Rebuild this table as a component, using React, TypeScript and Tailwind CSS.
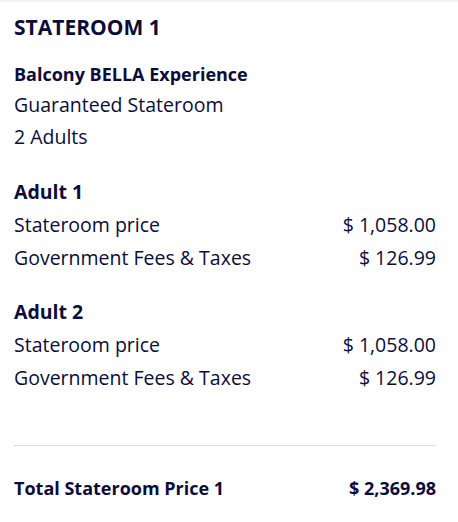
function Row({ label, value }: { label: string; value: string }) {
  return (
    <div className="flex justify-between text-[19.5px] leading-[33px]">
      <span>{label}</span>
      <span>{value}</span>
    </div>
  );
}

export default function App() {
  const font = { fontFamily: '"Open Sans", sans-serif' };
  return (
    <div style={font} className="w-[458px] h-[522px] bg-white text-[#0b0d38] border-t-2 border-[#f4f4f4]">
      <div className="pl-[14px] pr-[22px] pt-[10px]">
        <div className="text-[21px] font-bold leading-[30px]">STATEROOM 1</div>
        <div className="mt-[18px] text-[18px] font-bold leading-[29px]">Balcony BELLA Experience</div>
        <div className="text-[19.5px] leading-[32px]">Guaranteed Stateroom</div>
        <div className="text-[19.5px] leading-[32px]">2 Adults</div>
        <div className="mt-[22px]">
          <div className="text-[19.5px] font-bold leading-[33px]">Adult 1</div>
          <Row label="Stateroom price" value="$ 1,058.00" />
          <Row label="Government Fees & Taxes" value="$ 126.99" />
        </div>
        <div className="mt-[21px]">
          <div className="text-[19.5px] font-bold leading-[33px]">Adult 2</div>
          <Row label="Stateroom price" value="$ 1,058.00" />
          <Row label="Government Fees & Taxes" value="$ 126.99" />
        </div>
        <div className="mt-[51px] border-t border-[#dcdcdc]" />
        <div className="mt-[26px] flex justify-between text-[18px] font-bold leading-[32px]">
          <span>Total Stateroom Price 1</span>
          <span>$ 2,369.98</span>
        </div>
      </div>
    </div>
  );
}
